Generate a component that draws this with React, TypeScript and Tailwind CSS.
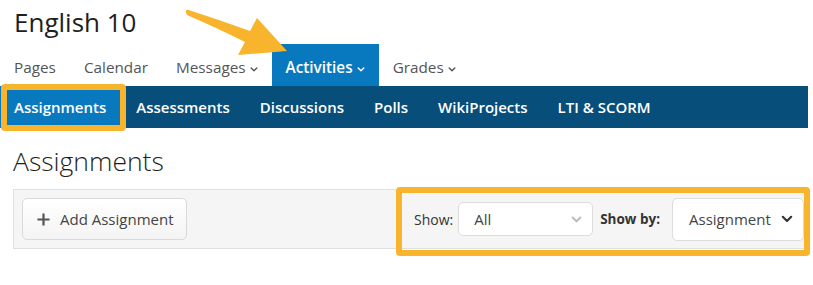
import React from 'react';

const Chevron = ({ className = '' }: { className?: string }) => (
  <svg viewBox="0 0 10 6" className={className} fill="none" stroke="currentColor" strokeWidth="1.8" strokeLinecap="round" strokeLinejoin="round">
    <path d="M1.5 1.2 L5 4.6 L8.5 1.2" />
  </svg>
);

const topNav = ['Pages', 'Calendar', 'Messages', 'Activities', 'Grades'];
const withMenu = ['Messages', 'Activities', 'Grades'];
const subNav = ['Assignments', 'Assessments', 'Discussions', 'Polls', 'WikiProjects', 'LTI & SCORM'];

export default function App() {
  return (
    <div className="relative w-[813px] h-[285px] bg-white font-['Open_Sans',sans-serif] overflow-hidden">
      {/* Course title */}
      <div className="h-[44px] pt-[5px] pl-[14px] text-[26px] leading-[34px] text-[#1e1e1e]">English 10</div>

      {/* Primary tabs */}
      <nav className="flex h-[42px]">
        {topNav.map((item) => {
          const active = item === 'Activities';
          return (
            <div
              key={item}
              className={`flex items-center gap-[4px] px-[14px] pt-[5px] text-[15.3px] ${
                active ? 'bg-[#0878bf] text-white font-semibold' : 'text-[#555]'
              }`}
            >
              <span>{item}</span>
              {withMenu.includes(item) && <Chevron className="w-[8px] h-[5px] mt-[3px]" />}
            </div>
          );
        })}
      </nav>

      {/* Secondary tabs */}
      <nav className="flex h-[42px] w-[808px] bg-[#074e7a]">
        {subNav.map((item) => {
          const active = item === 'Assignments';
          return (
            <div
              key={item}
              className={`relative flex items-center px-[15px] text-[15px] font-semibold text-white ${
                active ? 'bg-[#0878bf] pl-[14px]' : ''
              }`}
            >
              {item}
              {active && (
                <span className="absolute left-[1px] -right-[5px] -top-[2px] -bottom-[3px] border-[6px] border-[#f9b42d] rounded-[4px]" />
              )}
            </div>
          );
        })}
      </nav>

      {/* Page heading */}
      <h2 className="mt-[16px] pl-[13px] text-[26.5px] leading-[34px] font-light text-[#1e1e1e]">Assignments</h2>

      {/* Toolbar */}
      <div className="mt-[11px] ml-[13px] w-[795px] h-[60px] flex items-center justify-between pl-[8px] pr-[3px] bg-[#f5f5f5] border border-[#e0e0e0]">
        <button className="flex items-center gap-[10px] w-[165px] h-[42px] pl-[14px] rounded-[5px] border border-[#dadada] bg-gradient-to-b from-white to-[#f4f4f4] text-[15px] text-[#444]">
          <svg viewBox="0 0 14 14" className="w-[13px] h-[13px]" stroke="#555" strokeWidth="2.4">
            <path d="M7 0.5 V13.5 M0.5 7 H13.5" />
          </svg>
          Add Assignment
        </button>

        <div className="relative flex items-center">
          <span className="text-[14px] text-[#333] mr-[5px]">Show:</span>
          <div className="flex items-center justify-between w-[135px] h-[34px] pl-[15px] pr-[10px] bg-white border border-[#ddd] rounded-[5px] text-[15px] text-[#444]">
            <span>All</span>
            <Chevron className="w-[11px] h-[7px] text-[#bbb]" />
          </div>
          <span className="ml-[7px] mr-[12px] text-[13.5px] font-bold text-[#333]">Show by:</span>
          <div className="flex items-center gap-[10px] w-[132px] h-[43px] pl-[16px] bg-white border border-[#ddd] rounded-[5px] text-[15px] text-[#444]">
            <span>Assignment</span>
            <Chevron className="w-[12px] h-[8px] text-[#333]" />
          </div>
          {/* annotation frame */}
          <span className="absolute -left-[18px] -right-[6px] -top-[11px] -bottom-[15px] border-[6px] border-[#f9b42d] rounded-[4px]" />
        </div>
      </div>

      {/* annotation arrow */}
      <svg className="absolute left-0 top-0 w-[813px] h-[285px] pointer-events-none" viewBox="0 0 813 285">
        <path
          d="M187 9.5 Q220 20 250 31 L257 18 L287 51 L238 55 L245 42 Q215 27 188 15.5 Q184 12 187 9.5 Z"
          fill="#f9b42d"
        />
      </svg>
    </div>
  );
}
